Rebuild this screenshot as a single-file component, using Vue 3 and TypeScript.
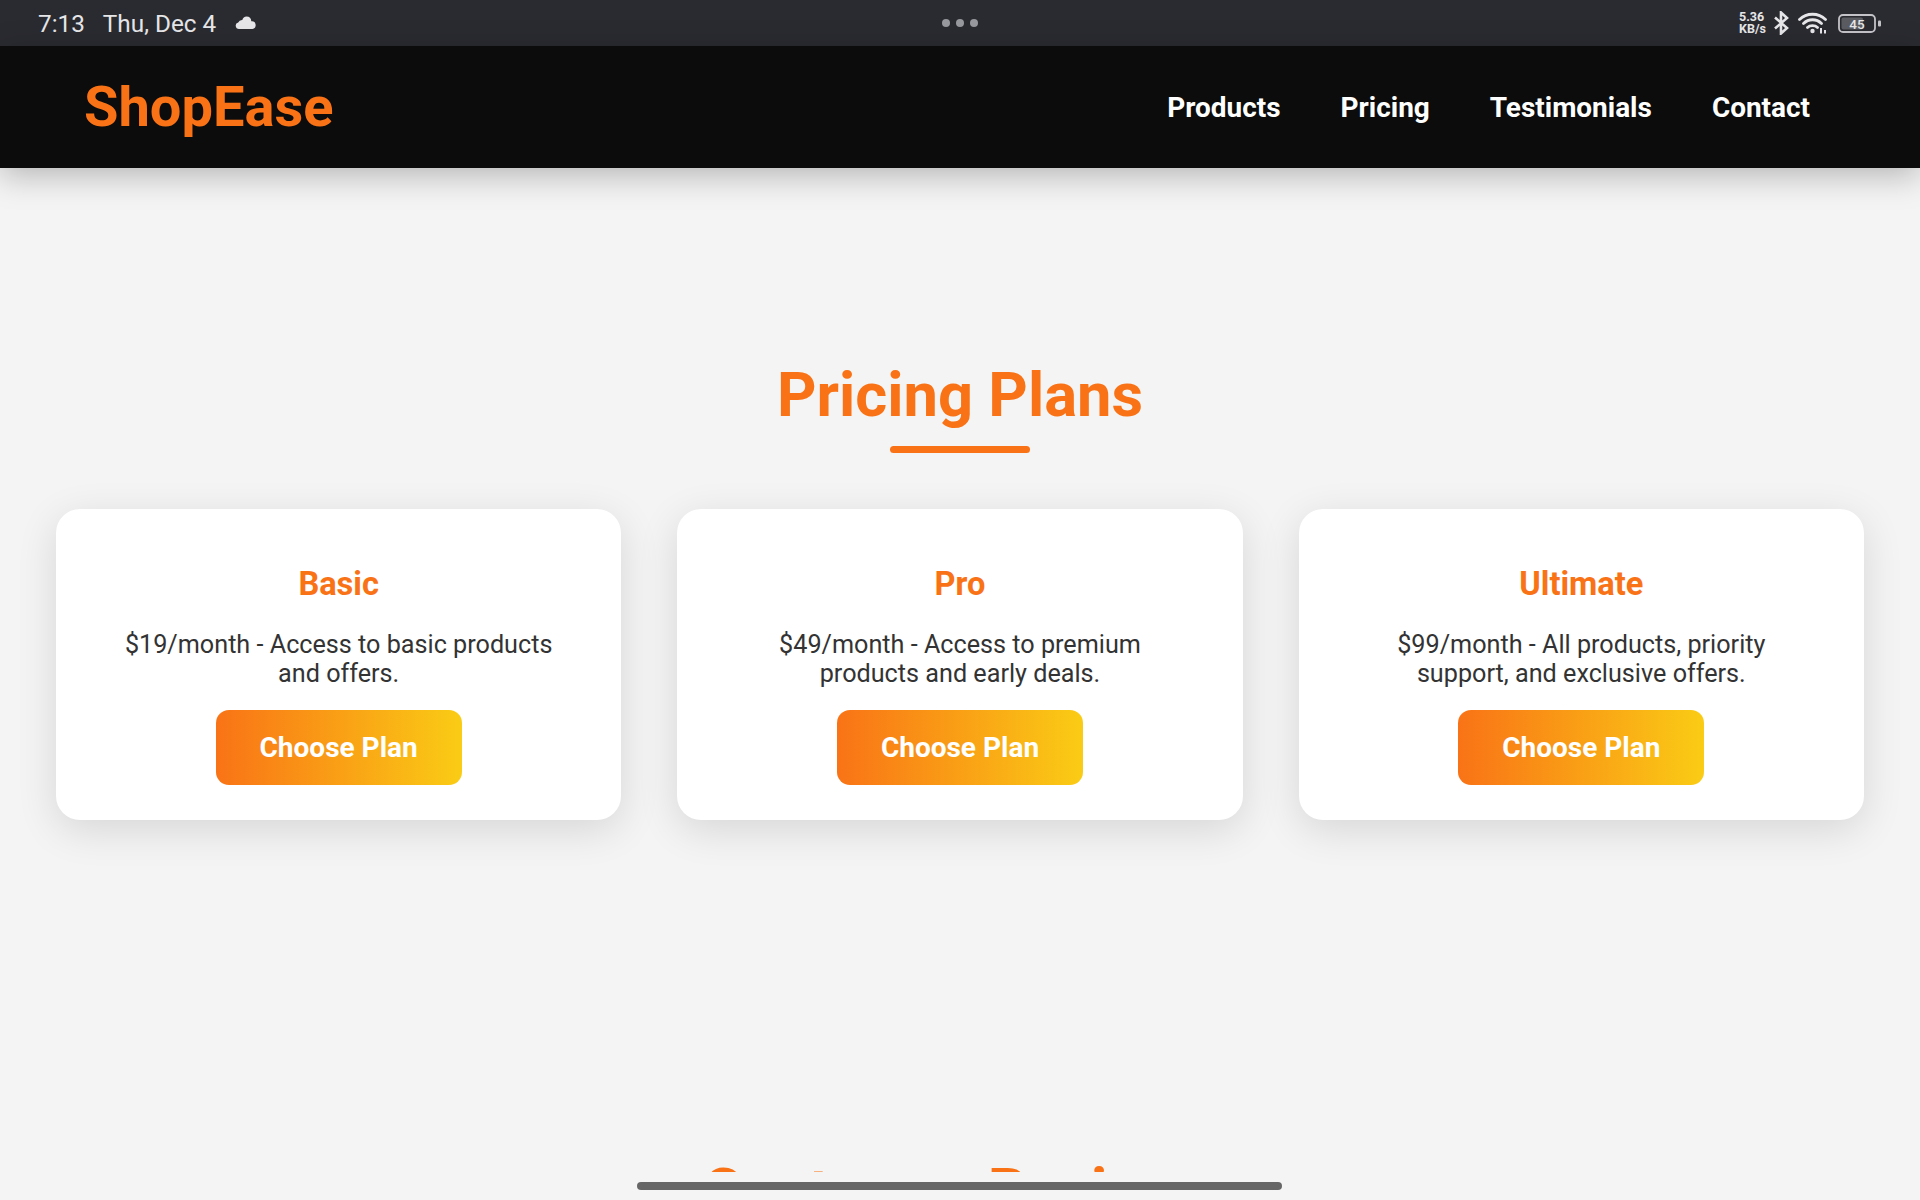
<template>
  <div class="screen">
    <div class="status-bar">
      <div class="status-bar__left">
        <span class="status-bar__time">7:13</span>
        <span>Thu, Dec 4</span>
        <svg class="status-bar__cloud" viewBox="0 0 21 13" aria-hidden="true">
          <path d="M4 13A3.300 3.300 0 0 1 3.200 6.500 4.200 4.200 0 0 1 7.300 4 5 5 0 0 1 11.500 .5 5 5 0 0 1 16.300 5.300 3.900 3.900 0 0 1 17.500 13Z" fill="currentColor" />
        </svg>
      </div>
      <div class="status-bar__dots"><i></i><i></i><i></i></div>
      <div class="status-bar__right">
        <div class="status-bar__speed"><span>5.36</span><span>KB/s</span></div>
        <svg class="status-bar__bt" viewBox="0 0 15 24" fill="none" stroke="currentColor" stroke-width="2.600" aria-hidden="true">
          <path d="M1 6.500 13 17 7 22.500V1.500L13 7 1 17.500" />
        </svg>
        <svg class="status-bar__wifi" viewBox="0 0 30 22" fill="none" stroke="currentColor" stroke-width="2.800" stroke-linecap="round" aria-hidden="true">
          <path d="M1.500 7.500C8.500 .5 20.500 .5 27.500 7.500M5.500 11.500C10.500 6.500 18.500 6.500 23.500 11.500M9.500 15.500C12 13 17 13 19.500 15.500" />
          <circle cx="14.500" cy="19" r="2.200" fill="currentColor" stroke="none" />
          <path d="M23 21.500v-5.500M27 21.500v-3.500" stroke-width="2" stroke-linecap="butt" />
        </svg>
        <svg class="status-bar__battery" viewBox="0 0 43 19" aria-hidden="true">
          <rect x="1" y="1" width="36" height="17" rx="4" fill="none" stroke="#c4c4c8" stroke-width="1.800" />
          <rect x="3.500" y="3.500" width="21.500" height="12" rx="2" fill="#5b5c62" />
          <rect x="40" y="6.500" width="3" height="6" rx="1" fill="#c4c4c8" />
          <text x="19" y="14.500" text-anchor="middle" class="status-bar__level">45</text>
        </svg>
      </div>
    </div>

    <header class="topnav">
      <div class="topnav__logo">ShopEase</div>
      <nav class="topnav__links">
        <a v-for="link in links" :key="link">{{ link }}</a>
      </nav>
    </header>

    <main class="content">
      <section class="pricing">
        <h2 class="section-title">Pricing Plans</h2>
        <div class="plans">
          <article v-for="plan in plans" :key="plan.name" class="plan">
            <h3>{{ plan.name }}</h3>
            <p>{{ plan.text }}</p>
            <button type="button">Choose Plan</button>
          </article>
        </div>
      </section>
      <section class="reviews">
        <h2 class="section-title">Customer Reviews</h2>
      </section>
    </main>

    <div class="gesture"><span></span></div>
  </div>
</template>

<script setup lang="ts">
const links = ['Products', 'Pricing', 'Testimonials', 'Contact'];

const plans = [
  { name: 'Basic', text: '$19/month - Access to basic products and offers.' },
  { name: 'Pro', text: '$49/month - Access to premium products and early deals.' },
  { name: 'Ultimate', text: '$99/month - All products, priority support, and exclusive offers.' },
];
</script>

<style>
html,
body {
  margin: 0;
  background: #f4f4f4;
}
</style>

<style scoped>
.screen {
  height: 1200px;
  display: flex;
  flex-direction: column;
  overflow: hidden;
  background: #f4f4f4;
  font-family: Roboto, "Liberation Sans", sans-serif;
}

.status-bar {
  position: relative;
  flex: 0 0 46px;
  display: flex;
  align-items: center;
  justify-content: space-between;
  padding: 0 39px 0 38px;
  background: #2a2b31;
  color: #e6e6e8;
  font-size: 24.300px;
}

.status-bar__left {
  display: flex;
  align-items: center;
}

.status-bar__time {
  margin-right: 18px;
}

.status-bar__cloud {
  width: 21px;
  height: 13px;
  margin: 0 0 1px 19px;
}

.status-bar__dots {
  position: absolute;
  left: 942px;
  top: 19px;
  display: flex;
  gap: 6px;
}

.status-bar__dots i {
  width: 8px;
  height: 8px;
  border-radius: 50%;
  background: #98999e;
}

.status-bar__right {
  display: flex;
  align-items: center;
}

.status-bar__speed {
  display: flex;
  flex-direction: column;
  font-size: 12.500px;
  font-weight: 700;
  line-height: 12px;
  margin-right: 8px;
}

.status-bar__bt {
  width: 15px;
  height: 24px;
  margin-right: 9px;
}

.status-bar__wifi {
  width: 30px;
  height: 22px;
  margin-right: 10px;
}

.status-bar__battery {
  width: 43px;
  height: 19px;
}

.status-bar__level {
  font-size: 13.500px;
  font-weight: 500;
  fill: #e6e6e8;
}

.topnav {
  position: relative;
  z-index: 1;
  flex: 0 0 122px;
  display: flex;
  align-items: center;
  justify-content: space-between;
  padding: 0 110px 0 84px;
  background: #0c0c0c;
  box-shadow: 0 8px 30px rgba(0, 0, 0, 0.25);
}

.topnav__logo {
  color: #f97316;
  font-size: 56px;
  font-weight: 700;
}

.topnav__links {
  display: flex;
  gap: 60px;
}

.topnav__links a {
  color: #fff;
  font-size: 27.950px;
  font-weight: 700;
}

.content {
  flex: 1;
  min-height: 0;
  overflow: hidden;
}

.pricing {
  padding: 191px 56px 0;
}

.section-title {
  position: relative;
  margin: 0 0 56px;
  color: #f97316;
  font-size: 61.440px;
  font-weight: 700;
  line-height: 72px;
  text-align: center;
}

.section-title::after {
  content: "";
  display: block;
  width: 140px;
  height: 7px;
  margin: 15px auto 0;
  border-radius: 4px;
  background: #f97316;
}

.plans {
  display: grid;
  grid-template-columns: repeat(3, 1fr);
  gap: 56px;
}

.plan {
  padding: 56px 56px 35px;
  border-radius: 24px;
  background: #fff;
  box-shadow: 0 10px 40px rgba(0, 0, 0, 0.12);
  text-align: center;
}

.plan h3 {
  margin: 0 0 26px;
  color: #f97316;
  font-size: 32.600px;
  font-weight: 700;
  line-height: 39px;
}

.plan p {
  margin: 0 0 22px;
  color: #333;
  font-size: 25.200px;
  font-weight: 400;
  line-height: 29px;
}

.plan button {
  width: 246px;
  height: 75px;
  border: none;
  border-radius: 13px;
  background: linear-gradient(90deg, #f97316, #facc15);
  color: #fff;
  font-family: inherit;
  font-size: 28px;
  font-weight: 700;
  cursor: pointer;
}

.reviews {
  padding-top: 335px;
}

.gesture {
  flex: 0 0 28px;
  display: flex;
  justify-content: center;
  padding: 10px 1px 0 0;
  box-sizing: border-box;
  background: #f4f4f4;
}

.gesture span {
  width: 645px;
  height: 8px;
  border-radius: 4px;
  background: #666;
}
</style>
